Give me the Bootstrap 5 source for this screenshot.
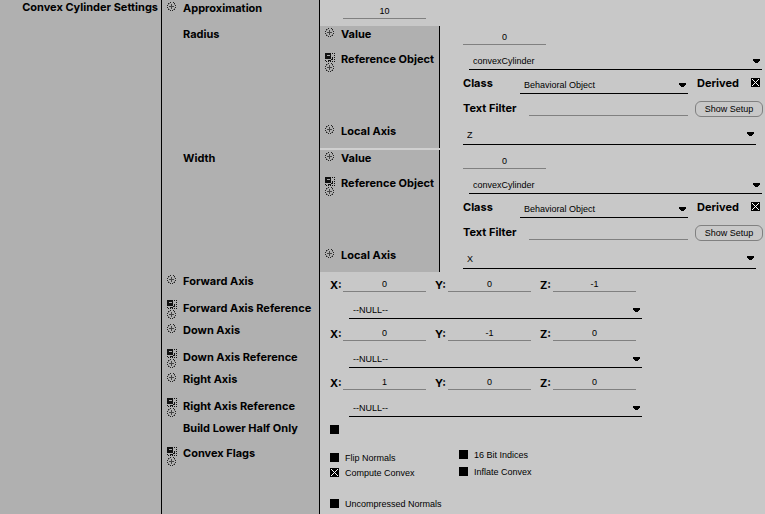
<!DOCTYPE html>
<html lang="en">
<head>
<meta charset="utf-8">
<meta name="viewport" content="width=device-width, initial-scale=1">
<title>Convex Cylinder Settings</title>
<link href="https://cdn.jsdelivr.net/npm/bootstrap@5.3.0/dist/css/bootstrap.min.css" rel="stylesheet">
<style>
body { background: #c8c8c8; color: #000; font: 9px/12px "Liberation Sans", Arial, sans-serif; }
.title-cell, .prop-label, .name { font: 700 11px/14px Inter, "Liberation Sans", sans-serif; }
.title-cell { flex: 0 0 162px; background: #b0b0b0; border-right: 1px solid #000; padding-right: 3px; }
.prop-label { flex: 0 0 158px; background: #b0b0b0; border-right: 1px solid #000; padding: 1px 0 0 5px; white-space: nowrap; }
.prop-label.sub { flex-basis: 120px; }
.icons { flex: 0 0 16px; padding-top: 1px; }
.icons svg { display: block; width: 10px; height: 10px; }
.h-row { min-height: 25px; }
.h-first { min-height: 26px; }
.h-ref { min-height: 24px; }
.h-ref label { padding-top: 2px; }
.h-object { min-height: 72px; }
.group-end { width: 120px; height: 2px; background: #d0d0d0; }
.last-group { padding-bottom: 1px; }
.field { height: 15px; border: 0; border-bottom: 1px solid #808080; background: transparent; padding: 0; font-size: 9px; line-height: 14px; color: #000; border-radius: 0; min-width: 0; }
.num { width: 83px; text-align: center; }
.pick { appearance: none; height: 17px; border: 0; border-bottom: 1px solid #000; border-radius: 0; padding: 0 14px 0 4px; font-size: 9px; line-height: 16px; color: #000; min-width: 0;
  background: transparent url("data:image/svg+xml,%3Csvg xmlns='http://www.w3.org/2000/svg' width='7' height='4' shape-rendering='crispEdges'%3E%3Cpath d='M0 0h7v1H0zM0 1h7v1H0zM1 2h5v1H1zM2 3h3v1H2z'/%3E%3C/svg%3E") no-repeat right 2px center; }
.object-pick { height: 19px; padding-top: 2px; background-position: right 2px top 8px; margin: 0 3px 0 6px; }
.axis-pick { height: 22px; padding-top: 2px; margin-right: 9px; }
.null-pick { height: 21px; padding-top: 3px; width: 293px; margin-left: 29px; background-position: right 2px top 10px; }
.tick { appearance: none; flex: none; width: 9px; height: 9px; margin: 0; background: #000; border-radius: 0; }
.tick:checked { background: url("data:image/svg+xml,%3Csvg xmlns='http://www.w3.org/2000/svg' width='9' height='9'%3E%3Cpath d='M0 0h9v9H0z'/%3E%3Cpath d='M1 1l7 7M8 1l-7 7' stroke='white'/%3E%3C/svg%3E"); }
.nested { padding-left: 23px; }
.first-field { padding: 4px 0 0 23px; }
.axis { padding: 4px 0 0 10px; }
.axis-item { width: 105px; }
.axis-item .name { width: 13px; padding-top: 1px; }
.class-row { margin-top: 6px; padding-right: 5px; }
.class-row .pick { height: 18px; padding-top: 1px; }
.class-name { width: 57px; }
.derived { width: 54px; margin-left: 9px; }
.class-row .tick { margin-top: 2px; }
.filter-row { margin-top: 7px; padding-right: 2px; }
.filter-name { width: 66px; }
.setup { width: 68px; height: 16px; margin-left: 7px; border: 1px solid #808080; border-radius: 6px; background: transparent; padding: 0; font-size: 9px; line-height: 14px; color: #000; }
.build { padding: 5px 0 0 10px; }
.flags { padding: 1px 0 0 10px; }
.flag-list { width: 129px; }
.flag { display: flex; align-items: center; gap: 6px; height: 15px; white-space: nowrap; }
.flag-list.loose .flag { height: 17px; }
</style>
<script src="https://cdn.jsdelivr.net/npm/bootstrap@5.3.0/dist/js/bootstrap.bundle.min.js"></script>
</head>
<body>
<svg class="d-none" aria-hidden="true">
  <symbol id="gear" viewBox="0 0 10 10">
    <path d="M3 0h1v1H3zM6 0h1v1H6zM1 1h1v1H1zM7 1h1v1H7zM0 3h1v1H0zM8 3h1v1H8zM0 5h1v1H0zM8 5h1v1H8zM1 7h1v1H1zM7 7h1v1H7zM3 8h1v1H3zM5 8h1v1H5z" fill="#222"/>
    <path d="M2 1h1v1H2zM1 2h1v1H1zM7 2h1v1H7zM1 6h1v1H1zM7 6h1v1H7zM2 7h1v1H2zM6 7h1v1H6z" fill="#777"/>
    <path d="M4 2h1v5H4zM2 4h5v1H2z" fill="#444"/>
  </symbol>
  <symbol id="link" viewBox="0 0 10 10">
    <path d="M0 0h6v6H0zM7 0h1v1H7zM9 0h1v1H9zM9 2h1v1H9zM9 4h1v1H9zM9 6h1v1H9zM9 8h1v1H9zM7 8h1v1H7zM5 8h1v1H5zM3 8h1v1H3zM1 8h1v1H1zM0 7h1v1H0zM6 6h2v1H6zM3 7h3v1H3zM7 4h1v2H7z" fill="#111"/>
    <path d="M2 2h3v1H2z" fill="#aaa"/>
  </symbol>
</svg>
<main class="d-flex min-vh-100">
  <h1 class="title-cell text-end m-0">Convex Cylinder Settings</h1>
  <div class="d-flex flex-column flex-grow-1">
    <div class="d-flex h-first">
      <div class="prop-label d-flex"><span class="icons"><svg><use href="#gear"/></svg></span><label for="approx">Approximation</label></div>
      <div class="first-field"><input class="field num" id="approx" value="10"></div>
    </div>

    <section class="d-flex">
      <div class="prop-label d-flex"><span class="icons"></span>Radius</div>
      <div class="flex-grow-1">
        <div class="d-flex h-row">
          <div class="prop-label sub d-flex"><span class="icons"><svg><use href="#gear"/></svg></span><label for="r-value">Value</label></div>
          <div class="nested pt-1"><input class="field num" id="r-value" value="0"></div>
        </div>
        <div class="d-flex h-object">
          <div class="prop-label sub d-flex"><span class="icons"><svg><use href="#link"/></svg><svg><use href="#gear"/></svg></span><label for="r-ref">Reference Object</label></div>
          <div class="nested flex-grow-1">
            <div class="d-flex"><select class="pick object-pick flex-grow-1" id="r-ref"><option>convexCylinder</option></select></div>
            <div class="d-flex class-row"><label class="name class-name" for="r-class">Class</label><select class="pick flex-grow-1" id="r-class"><option>Behavioral Object</option></select><label class="name derived" for="r-derived">Derived</label><input type="checkbox" class="tick" id="r-derived" checked></div>
            <div class="d-flex filter-row"><label class="name filter-name" for="r-filter">Text Filter</label><input class="field flex-grow-1" id="r-filter"><button class="setup" type="button">Show Setup</button></div>
          </div>
        </div>
        <div class="d-flex h-row">
          <div class="prop-label sub d-flex"><span class="icons"><svg><use href="#gear"/></svg></span><label for="r-axis">Local Axis</label></div>
          <div class="nested flex-grow-1 d-flex"><select class="pick axis-pick flex-grow-1" id="r-axis"><option>Z</option></select></div>
        </div>
        <div class="group-end"></div>
      </div>
    </section>

    <section class="d-flex">
      <div class="prop-label d-flex"><span class="icons"></span>Width</div>
      <div class="flex-grow-1 last-group">
        <div class="d-flex h-row">
          <div class="prop-label sub d-flex"><span class="icons"><svg><use href="#gear"/></svg></span><label for="w-value">Value</label></div>
          <div class="nested pt-1"><input class="field num" id="w-value" value="0"></div>
        </div>
        <div class="d-flex h-object">
          <div class="prop-label sub d-flex"><span class="icons"><svg><use href="#link"/></svg><svg><use href="#gear"/></svg></span><label for="w-ref">Reference Object</label></div>
          <div class="nested flex-grow-1">
            <div class="d-flex"><select class="pick object-pick flex-grow-1" id="w-ref"><option>convexCylinder</option></select></div>
            <div class="d-flex class-row"><label class="name class-name" for="w-class">Class</label><select class="pick flex-grow-1" id="w-class"><option>Behavioral Object</option></select><label class="name derived" for="w-derived">Derived</label><input type="checkbox" class="tick" id="w-derived" checked></div>
            <div class="d-flex filter-row"><label class="name filter-name" for="w-filter">Text Filter</label><input class="field flex-grow-1" id="w-filter"><button class="setup" type="button">Show Setup</button></div>
          </div>
        </div>
        <div class="d-flex h-row">
          <div class="prop-label sub d-flex"><span class="icons"><svg><use href="#gear"/></svg></span><label for="w-axis">Local Axis</label></div>
          <div class="nested flex-grow-1 d-flex"><select class="pick axis-pick flex-grow-1" id="w-axis"><option>X</option></select></div>
        </div>
      </div>
    </section>

    <div class="d-flex h-row">
      <div class="prop-label d-flex"><span class="icons"><svg><use href="#gear"/></svg></span>Forward Axis</div>
      <div class="axis d-flex">
        <div class="axis-item d-flex"><label class="name" for="f-x">X:</label><input class="field num" id="f-x" value="0"></div>
        <div class="axis-item d-flex"><label class="name" for="f-y">Y:</label><input class="field num" id="f-y" value="0"></div>
        <div class="axis-item d-flex"><label class="name" for="f-z">Z:</label><input class="field num" id="f-z" value="-1"></div>
      </div>
    </div>
    <div class="d-flex h-ref">
      <div class="prop-label d-flex"><span class="icons"><svg><use href="#link"/></svg><svg><use href="#gear"/></svg></span><label for="f-ref">Forward Axis Reference</label></div>
      <select class="pick null-pick" id="f-ref"><option>--NULL--</option></select>
    </div>
    <div class="d-flex h-row">
      <div class="prop-label d-flex"><span class="icons"><svg><use href="#gear"/></svg></span>Down Axis</div>
      <div class="axis d-flex">
        <div class="axis-item d-flex"><label class="name" for="d-x">X:</label><input class="field num" id="d-x" value="0"></div>
        <div class="axis-item d-flex"><label class="name" for="d-y">Y:</label><input class="field num" id="d-y" value="-1"></div>
        <div class="axis-item d-flex"><label class="name" for="d-z">Z:</label><input class="field num" id="d-z" value="0"></div>
      </div>
    </div>
    <div class="d-flex h-ref">
      <div class="prop-label d-flex"><span class="icons"><svg><use href="#link"/></svg><svg><use href="#gear"/></svg></span><label for="d-ref">Down Axis Reference</label></div>
      <select class="pick null-pick" id="d-ref"><option>--NULL--</option></select>
    </div>
    <div class="d-flex h-row">
      <div class="prop-label d-flex"><span class="icons"><svg><use href="#gear"/></svg></span>Right Axis</div>
      <div class="axis d-flex">
        <div class="axis-item d-flex"><label class="name" for="t-x">X:</label><input class="field num" id="t-x" value="1"></div>
        <div class="axis-item d-flex"><label class="name" for="t-y">Y:</label><input class="field num" id="t-y" value="0"></div>
        <div class="axis-item d-flex"><label class="name" for="t-z">Z:</label><input class="field num" id="t-z" value="0"></div>
      </div>
    </div>
    <div class="d-flex h-ref">
      <div class="prop-label d-flex"><span class="icons"><svg><use href="#link"/></svg><svg><use href="#gear"/></svg></span><label for="t-ref">Right Axis Reference</label></div>
      <select class="pick null-pick" id="t-ref"><option>--NULL--</option></select>
    </div>
    <div class="d-flex h-row">
      <div class="prop-label d-flex"><span class="icons"></span><label for="build">Build Lower Half Only</label></div>
      <div class="build d-flex"><input type="checkbox" class="tick" id="build"></div>
    </div>
    <div class="d-flex flex-grow-1">
      <div class="prop-label d-flex"><span class="icons"><svg><use href="#link"/></svg><svg><use href="#gear"/></svg></span>Convex Flags</div>
      <div class="flags d-flex">
        <div class="flag-list pt-1">
          <label class="flag"><input type="checkbox" class="tick">Flip Normals</label>
          <label class="flag"><input type="checkbox" class="tick" checked>Compute Convex</label>
          <label class="flag mt-3"><input type="checkbox" class="tick">Uncompressed Normals</label>
        </div>
        <div class="flag-list loose">
          <label class="flag"><input type="checkbox" class="tick">16 Bit Indices</label>
          <label class="flag"><input type="checkbox" class="tick">Inflate Convex</label>
        </div>
      </div>
    </div>
  </div>
</main>
</body>
</html>
